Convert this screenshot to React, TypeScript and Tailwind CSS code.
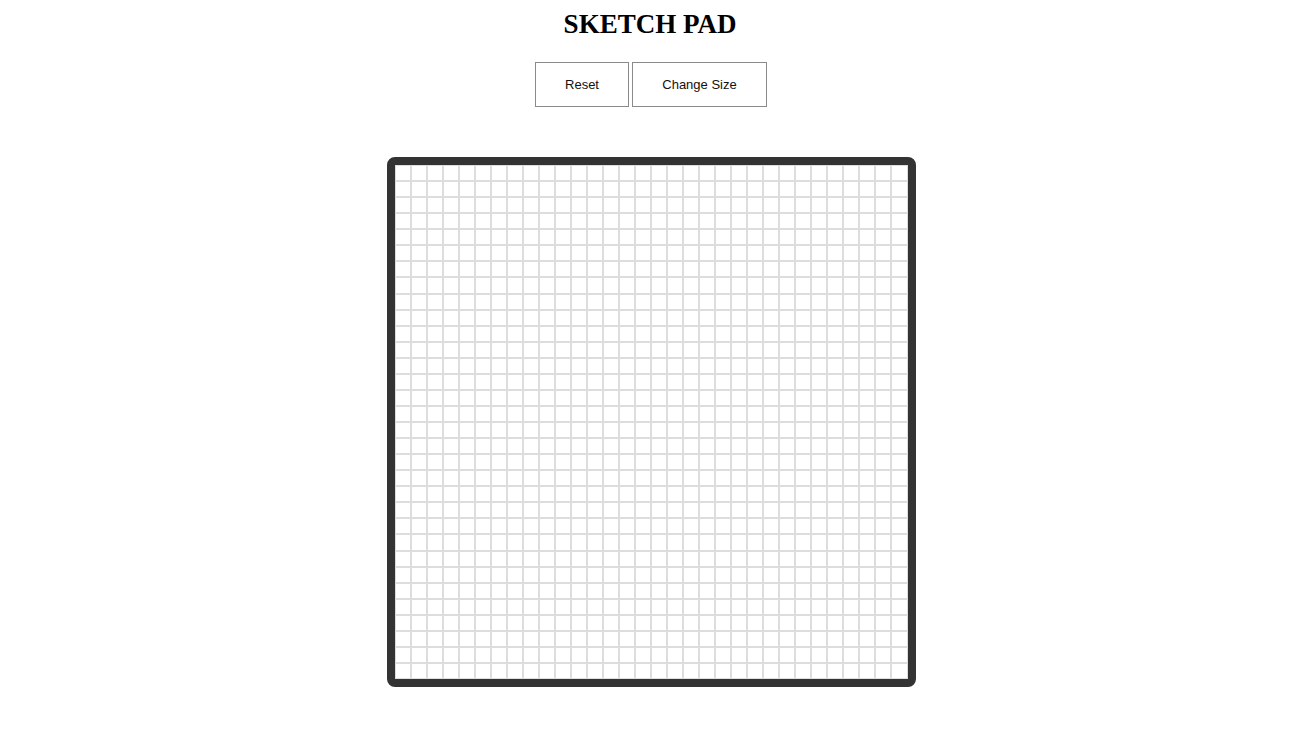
import React from "react";

export default function App() {
  const cells = Array.from({ length: 32 * 32 });
  return (
    <div className="min-h-[732px] bg-white flex flex-col items-center" style={{ fontFamily: '"Liberation Sans", Arial, sans-serif' }}>
      <h1 className="mt-[9px] text-[27px] leading-[30px] font-bold text-black" style={{ fontFamily: '"Liberation Serif", "Times New Roman", serif' }}>
        SKETCH PAD
      </h1>
      <div className="mt-[23px] flex gap-[3px] pl-[2px]">
        <button className="h-[45px] w-[94px] border border-[#8a8a8a] bg-white text-[13px] text-[#111]">Reset</button>
        <button className="h-[45px] w-[135px] border border-[#8a8a8a] bg-white text-[13px] text-[#111]">Change Size</button>
      </div>
      <div className="mt-[50px] ml-[2px] border-[8px] border-[#333333] rounded-[8px] w-[529px] h-[530px] grid grid-cols-[repeat(32,1fr)] grid-rows-[repeat(32,1fr)] bg-white overflow-hidden">
        {cells.map((_, i) => (
          <div key={i} className="border border-[#dddddd]" />
        ))}
      </div>
    </div>
  );
}
